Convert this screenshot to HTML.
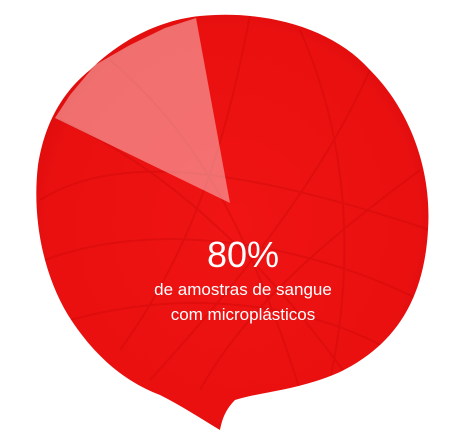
<!DOCTYPE html>
<html><head><meta charset="utf-8"><style>
html,body{margin:0;padding:0;background:#fff;width:460px;height:433px;overflow:hidden}
.t{position:absolute;left:0;width:486px;text-align:center;color:#fff;font-family:"Liberation Sans",sans-serif}
</style></head><body>
<svg width="460" height="433" style="position:absolute;left:0;top:0">
<defs>
<radialGradient id="g" cx="0.5" cy="0.5" r="0.55">
<stop offset="0" stop-color="#f01414"/>
<stop offset="0.85" stop-color="#ea1010"/>
<stop offset="1" stop-color="#dc0c0c"/>
</radialGradient>
<clipPath id="c"><path id="ball" d="M200,16 C260,10 330,25 370,70 C410,110 432,170 428,230 C424,300 395,345 340,372 C300,390 260,392 235,400 C225,410 222,420 220,430 C200,418 180,405 160,395 C120,380 90,350 68,315 C42,272 32,215 38,165 C45,120 65,90 90,70 C120,40 160,20 200,16 Z"/></clipPath>
</defs>
<use href="#ball" fill="url(#g)"/>
<g clip-path="url(#c)" stroke="#c80808" stroke-width="2" fill="none" opacity="0.35">
<path d="M40,200 C120,150 250,170 430,230"/>
<path d="M45,260 C150,220 300,240 420,300"/>
<path d="M70,320 C180,290 300,300 390,350"/>
<path d="M110,60 C180,120 240,200 300,390"/>
<path d="M300,30 C340,120 360,240 330,380"/>
<path d="M370,70 C330,160 260,260 150,380"/>
<path d="M60,120 C150,160 250,240 350,380"/>
<path d="M420,170 C340,230 250,300 200,390"/>
<path d="M250,15 C230,120 200,240 120,350"/>
</g>
<polygon points="230,203 55,118 70,95 95,65 130,45 165,28 196,18" fill="#ffffff" opacity="0.4"/>
</svg>
<div class="t" style="top:234px;font-size:36px;">80%</div>
<div class="t" style="top:280px;font-size:17px;">de amostras de sangue</div>
<div class="t" style="top:305px;font-size:17px;">com microplásticos</div>
</body></html>
